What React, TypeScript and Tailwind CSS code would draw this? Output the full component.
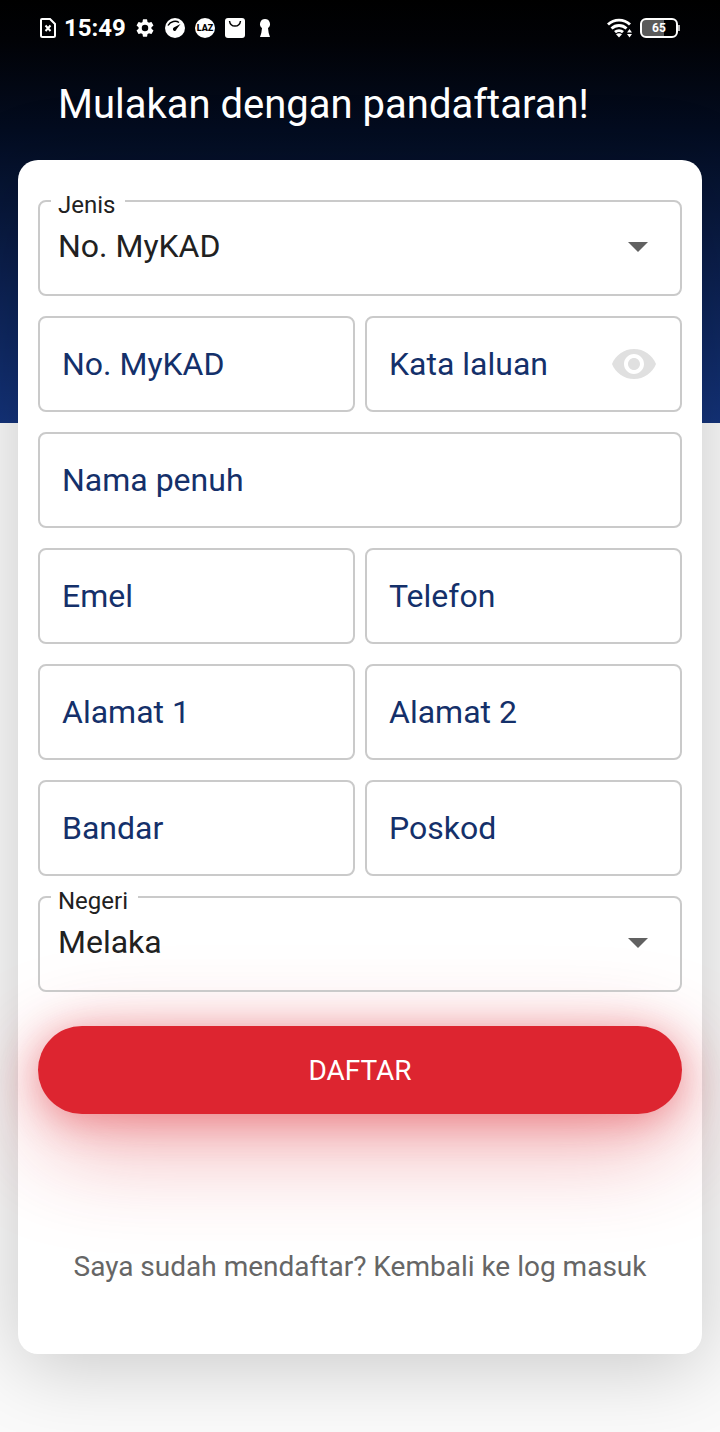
import { useState } from "react";
import type { ReactNode } from "react";

const frame =
  "relative flex h-24 items-center rounded-lg border-2 border-[#cacaca] focus-within:border-[#14306a]";

function TextField({
  label,
  type = "text",
  wide = false,
  children,
}: {
  label: string;
  type?: string;
  wide?: boolean;
  children?: ReactNode;
}) {
  return (
    <div className={wide ? `${frame} col-span-2` : frame}>
      <input
        type={type}
        aria-label={label}
        placeholder={label}
        className="h-full w-full min-w-0 flex-1 bg-transparent px-[22px] text-[32px] text-[#14306a] outline-none placeholder:text-[#14306a] placeholder:opacity-100"
      />
      {children}
    </div>
  );
}

function SelectField({ id, label, options }: { id: string; label: string; options: string[] }) {
  return (
    <div className={`${frame} col-span-2`}>
      <label
        htmlFor={id}
        className="absolute -top-[11px] left-[11px] bg-white pr-[10px] pl-[7px] text-2xl leading-7 text-[#212121]"
      >
        {label}
      </label>
      <select
        id={id}
        className="h-full w-full appearance-none bg-transparent px-[18px] pb-1 text-[32px] text-[#212121] outline-none"
      >
        {options.map((o) => (
          <option key={o}>{o}</option>
        ))}
      </select>
      <svg
        viewBox="0 0 20 12"
        className="pointer-events-none absolute right-8 h-3 w-5 fill-[#616161]"
        aria-hidden="true"
      >
        <path d="M0 0h20L10 10z" />
      </svg>
    </div>
  );
}

function StatusBar() {
  return (
    <div className="flex h-14 items-center justify-between px-10 text-white">
      <div className="flex items-center gap-[10px]">
        <div className="flex items-center gap-2">
          <svg viewBox="0 0 16 20" className="h-5 w-4" fill="none" stroke="currentColor" strokeWidth="2">
            <path d="M2 1h8l5 5v11.500q0 1.500-1.500 1.500h-11Q1 19 1 17.500V2q0-1 1-1z" />
            <path d="M5.500 7.500l5 5.500M10.500 7.500l-5 5.500" />
          </svg>
          <span className="w-[62px] text-2xl leading-7 font-bold">15:49</span>
        </div>
        <svg viewBox="2 2 20 20" className="mr-px h-[18px] w-[18px]" fill="currentColor">
          <path
            fillRule="evenodd"
            d="M19.140 12.940c.04-.3.06-.61.06-.94s-.02-.64-.07-.94l2.030-1.580a.49.49 0 0 0 .12-.61l-1.920-3.320a.49.49 0 0 0-.59-.22l-2.390.96a7 7 0 0 0-1.620-.94l-.36-2.540a.48.48 0 0 0-.48-.41h-3.840a.48.48 0 0 0-.47.41l-.36 2.540c-.59.24-1.130.57-1.620.94l-2.390-.96a.48.48 0 0 0-.59.22L2.740 8.870a.48.48 0 0 0 .12.610l2.030 1.580a6 6 0 0 0 0 1.880l-2.030 1.580a.49.49 0 0 0-.12.610l1.920 3.320c.12.220.37.290.59.220l2.390-.96c.5.380 1.030.7 1.620.94l.36 2.540c.05.240.24.410.48.410h3.840c.24 0 .44-.17.47-.41l.36-2.540a7 7 0 0 0 1.620-.94l2.390.96c.22.080.47 0 .59-.22l1.920-3.320a.48.48 0 0 0-.12-.61zM12 15.600a3.600 3.600 0 1 1 0-7.200 3.600 3.600 0 0 1 0 7.200z"
          />
        </svg>
        <svg viewBox="0 0 20 20" className="h-5 w-5">
          <circle cx="10" cy="10" r="10" fill="currentColor" />
          <path d="M3 7.500C5.500 3 11 2.300 14 4.500" fill="none" stroke="#000" strokeWidth="1.500" />
          <path d="M15.500 6L11.500 11.300A1.800 1.800 0 1 1 8.800 9.600z" fill="#000" />
        </svg>
        <span className="flex h-5 w-5 items-center justify-center rounded-full bg-white text-[9px] leading-none font-black text-black">
          LAZ
        </span>
        <svg viewBox="0 0 20 20" className="h-5 w-5">
          <rect width="20" height="20" rx="3" fill="currentColor" />
          <path d="M4.500 3c1 6.800 10 6.800 11 0" fill="none" stroke="#000" strokeWidth="1.500" />
        </svg>
        <svg viewBox="0 0 20 20" className="h-5 w-5" fill="currentColor">
          <path d="M10 1a5 5 0 0 1 3 9q.3 5 2 9H5q1.700-4 2-9a5 5 0 0 1 3-9z" />
        </svg>
      </div>
      <div className="flex items-center gap-2">
        <svg viewBox="0 0 25 20" className="h-5 w-[25px]">
          <g fill="none" stroke="currentColor" strokeWidth="2.900">
            <path d="M1 6.500a16 16 0 0 1 22 0" />
            <path d="M4.500 10.500a11 11 0 0 1 15 0" />
            <path d="M8 14.200a6 6 0 0 1 8 0" />
          </g>
          <path d="M9 16.200q3-2 6 0l-3 3.300z" fill="currentColor" />
          <path d="M20 14.500L22.500 11l2.500 3.500zM20 16h5l-2.500 3.500z" fill="currentColor" />
        </svg>
        <div className="flex items-center">
          <div className="flex h-5 w-[38px] items-center justify-center rounded-md border-2 border-white bg-linear-to-r from-[#5b5b5b] from-65% to-black to-65% text-xs leading-none font-bold">
            65
          </div>
          <div className="h-[6px] w-[2px] bg-white/70" />
        </div>
      </div>
    </div>
  );
}

export default function App() {
  const [visible, setVisible] = useState(false);
  return (
    <div className="min-h-screen bg-[linear-gradient(to_bottom,#000_0px,#010206_40px,#030c20_130px,#0a1d48_250px,#14337a_423px,#fafafa_423px)] px-[18px] pb-[78px] font-[Roboto,sans-serif]">
      <header className="-mx-[18px]">
        <StatusBar />
      </header>
      <h1 className="h-[104px] px-10 pt-[25px] text-[40px] leading-[48px] text-white">
        Mulakan dengan pandaftaran!
      </h1>
      <main className="rounded-[20px] bg-white px-5 pt-10 pb-[69px] shadow-[0_12px_80px_rgba(0,0,0,0.2)]">
        <form onSubmit={(e) => e.preventDefault()}>
          <div className="grid grid-cols-2 gap-x-[10px] gap-y-5">
            <SelectField id="jenis" label="Jenis" options={["No. MyKAD"]} />
            <TextField label="No. MyKAD" />
            <TextField label="Kata laluan" type={visible ? "text" : "password"}>
              <button
                type="button"
                aria-label="Kata laluan"
                onClick={() => setVisible(!visible)}
                className="mr-6 shrink-0"
              >
                <svg viewBox="1 4.500 22 15" className="h-[30px] w-11 fill-[#e0e0e0]">
                  <path d="M12 4.500C7 4.500 2.730 7.610 1 12c1.730 4.390 6 7.500 11 7.500s9.270-3.110 11-7.500c-1.730-4.390-6-7.500-11-7.500zM12 17c-2.760 0-5-2.240-5-5s2.240-5 5-5 5 2.240 5 5-2.240 5-5 5zm0-8c-1.660 0-3 1.340-3 3s1.340 3 3 3 3-1.340 3-3-1.340-3-3-3z" />
                </svg>
              </button>
            </TextField>
            <TextField label="Nama penuh" wide />
            <TextField label="Emel" type="email" />
            <TextField label="Telefon" type="tel" />
            <TextField label="Alamat 1" />
            <TextField label="Alamat 2" />
            <TextField label="Bandar" />
            <TextField label="Poskod" />
            <SelectField id="negeri" label="Negeri" options={["Melaka"]} />
          </div>
          <button
            type="submit"
            className="mt-[34px] block h-[88px] w-full rounded-full bg-[#dd2530] pt-[2px] text-[28px] text-white shadow-[0_6px_40px_rgba(221,37,48,0.45),0_30px_100px_rgba(221,37,48,0.4)]"
          >
            DAFTAR
          </button>
        </form>
        <a
          href="#masuk"
          className="relative mt-[135px] block text-center text-[28px] leading-9 whitespace-nowrap text-[#666]"
        >
          Saya sudah mendaftar? Kembali ke log masuk
        </a>
      </main>
    </div>
  );
}
